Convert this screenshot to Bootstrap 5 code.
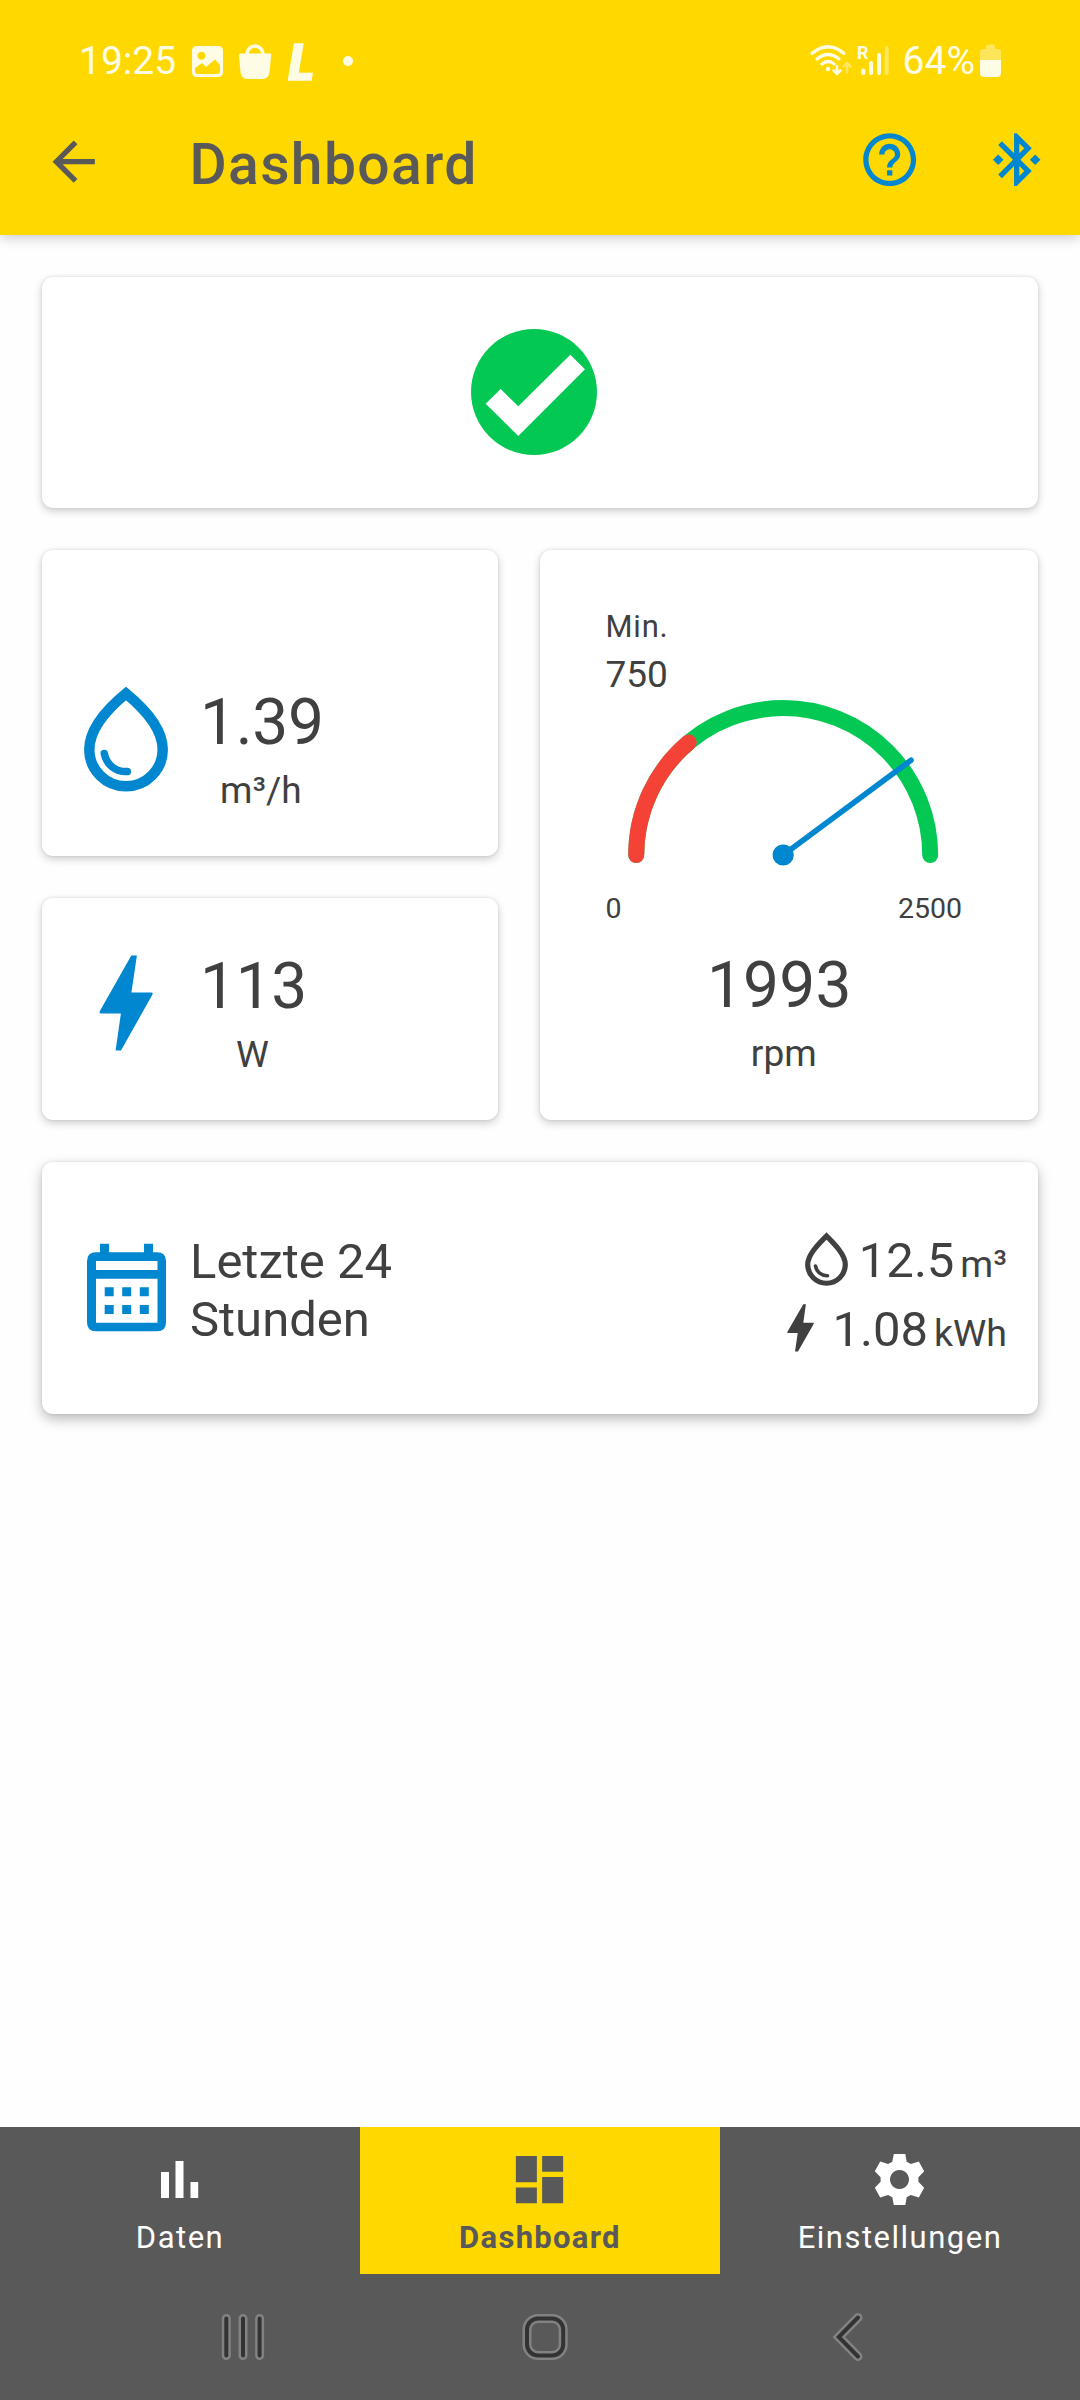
<!DOCTYPE html>
<html lang="de">
<head>
<meta charset="utf-8">
<meta name="viewport" content="width=device-width, initial-scale=1">
<title>Dashboard</title>
<link href="https://cdn.jsdelivr.net/npm/bootstrap@5.3.0/dist/css/bootstrap.min.css" rel="stylesheet">
<style>
  :root { --sun:#ffd800; --ash:#595959; --ink:#404040; --aqua:#0087cf; --leaf:#03c853; --alarm:#f44336; }
  body { font-family:Roboto, "Liberation Sans", sans-serif; color:var(--ink); width:1080px; height:2400px; background:#fefefe; overflow:hidden; }
  svg { display:block; flex-shrink:0; }
  .top-area { height:235px; background:var(--sun); box-shadow:0 3px 12px rgba(0,0,0,.2); position:relative; }
  .status-row { height:122px; padding:0 78px 0 79px; font-size:39px; line-height:46px; color:#fffce6; }
  .clock-text { width:111px; }
  .app-row { height:79px; padding:0 32px 0 42px; }
  .app-title { font-size:57px; line-height:66px; font-weight:500; color:var(--ash); margin-left:84px; padding-top:6px; letter-spacing:1.4px; }
  .app-actions { gap:63px; }
  .content-area { padding:41.500px 42px 0; gap:42px; }
  .tile { border:0; border-radius:11px; background:#fff; box-shadow:0 3px 9px rgba(0,0,0,.2), 0 0 3px rgba(0,0,0,.1); }
  .tile-status { height:231.500px; padding-right:12px; }
  .tile-pair { gap:42px; height:570px; }
  .tile-left { width:456px; gap:42px; }
  .tile-flow { height:306px; }
  .tile-power { height:222px; }
  .tile-metric { padding:0 42px 43px; }
  .metric-text { margin-left:32px; }
  .tile-gauge { width:498px; padding:59px 76px 0 65.500px; }
  .tile-day { height:252px; padding:0 31px 0 42px; box-shadow:0 5px 13px rgba(0,0,0,.27), 0 0 3px rgba(0,0,0,.1); }
  .num-big { font-size:64px; line-height:76px; letter-spacing:-.3px; }
  .num-speed { letter-spacing:.2px; padding-right:9px; }
  .num-unit { font-size:37px; line-height:44px; margin-top:8px; }
  .metric-text .num-unit { padding-right:2px; }
  .min-label { font-size:31px; line-height:36px; letter-spacing:.8px; }
  .min-value { font-size:37px; line-height:46px; margin-top:7px; }
  .gauge-dial { margin:-1px 0 0 -1.500px; }
  .scale-row { font-size:28.500px; line-height:34px; margin-top:24px; margin-bottom:22px; }
  .day-title { font-size:49px; line-height:58px; margin:6px 0 0 22px; }
  .day-sums { margin-top:18px; }
  .day-line { height:69px; font-size:49px; line-height:69px; }
  .day-line svg { margin-bottom:8px; }
  .day-line .drop-mini { margin-right:9.500px; }
  .day-line .bolt-mini { margin-right:18px; }
  .day-line small { font-size:37.500px; margin-left:6px; }
  .tabs-row { height:147px; background:var(--ash); }
  .tab-item { width:360px; padding-top:21px; color:#fff; font-size:31px; line-height:36px; letter-spacing:1.500px; }
  .tab-item svg { margin-right:1.500px; }
  .tab-item span { margin-top:8.500px; }
  .tab-current { background:var(--sun); color:var(--ash); font-weight:700; letter-spacing:1.300px; }
  .system-row { height:126px; background:var(--ash); padding:0 210px 0 220px; }
</style>
</head>
<body class="d-flex flex-column">
<header class="top-area">
  <div class="status-row d-flex align-items-center">
    <span class="clock-text">19:25</span>
    <svg width="46" height="40" viewBox="190 41 46 40"><path fill="#fffce6" fill-rule="evenodd" d="M197 46h21q5 0 5 5v21q0 5-5 5h-21q-5 0-5-5V51q0-5 5-5zM201.500 51.700a4 4 0 1 0 .01 0zM195 68v3q0 3 3 3h19q3 0 3-3v-6l-5-5.500-9 7.500-4-4z"/></svg>
    <svg width="48" height="40" viewBox="236 41 48 40"><path fill="#fffce6" d="M240 53.500h30q1.300 0 1.200 1.500l-1.700 17q-.8 7-7 7h-15q-6.200 0-7-7l-1.700-17q0-1.500 1.200-1.500z"/><path fill="none" stroke="#fffce6" stroke-width="3.300" d="M247 55c0-12 16-12 16 0"/></svg>
    <svg width="52" height="64" viewBox="284 29 52 64"><text x="288.500" y="79.500" font-family="Roboto, sans-serif" font-size="49" font-weight="900" font-style="italic" fill="#fffce6" stroke="#fffce6" stroke-width="1.500">L</text></svg>
    <svg width="24" height="40" viewBox="336 41 24 40"><circle cx="348" cy="61" r="5" fill="#fffce6"/></svg>
    <div class="d-flex align-items-center ms-auto">
      <svg width="95" height="40" viewBox="806 41 95 40">
        <g fill="none" stroke="#fffce6" stroke-width="3.200" stroke-linecap="round">
          <path d="M810 53.500q16-13.500 32 0M815 59q11-9 22 0M820 64q6-5 12 0"/>
          <path d="M835 66v8m-3.500-3.500 3.500 3.500 3.500-3.500" stroke-width="2.600"/>
          <path d="M845 72v-9m-3.500 3.500 3.500-3.500 3.500 3.500" stroke-width="2.600" opacity=".4"/>
          <path d="M861.300 70.500v2.500M869 63v10M877 55v18" stroke-width="4"/>
          <path d="M884.700 48v25" stroke-width="4" opacity=".4"/>
        </g>
        <circle cx="826" cy="69" r="2.200" fill="#fffce6"/>
        <text x="855" y="58.500" font-family="Roboto, sans-serif" font-size="18" font-weight="700" fill="#fffce6">R</text>
      </svg>
      <span>64%</span>
      <svg class="ms-1" width="23" height="40" viewBox="979 41 23 40"><path fill="#fff" opacity=".35" d="M980 60V52q0-3 3-3h3v-2.500q0-2 2-2h5q2 0 2 2V49h3q3 0 3 3v8z"/><path fill="#fffce6" d="M980 60h21v13q0 4-4 4h-13q-4 0-4-4z"/></svg>
    </div>
  </div>
  <div class="app-row d-flex align-items-center">
    <svg width="63.400" height="63.400" viewBox="0 0 24 24" fill="#595959"><path d="M20 11H7.830l5.590-5.590L12 4l-8 8 8 8 1.410-1.410L7.830 13H20v-2z"/></svg>
    <div class="app-title">Dashboard</div>
    <div class="app-actions d-flex ms-auto mb-1">
      <svg width="63.400" height="63.400" viewBox="0 0 24 24" fill="#0087cf"><path d="M11 18h2v-2h-2v2zm1-16C6.480 2 2 6.480 2 12s4.480 10 10 10 10-4.480 10-10S17.520 2 12 2zm0 18c-4.410 0-8-3.590-8-8s3.590-8 8-8 8 3.590 8 8-3.590 8-8 8zm0-14c-2.210 0-4 1.790-4 4h2c0-1.100.9-2 2-2s2 .9 2 2c0 2-3 1.750-3 5h2c0-2.250 3-2.500 3-5 0-2.210-1.790-4-4-4z"/></svg>
      <svg width="63.400" height="63.400" viewBox="0 0 24 24" fill="#0087cf"><path d="M7 12l-2-2-2 2 2 2 2-2zm10.710-4.290L12 2h-1v7.590L6.410 5 5 6.410 10.590 12 5 17.590 6.410 19 11 14.410V22h1l5.710-5.710-4.300-4.290 4.300-4.290zM13 5.830l1.880 1.880L13 9.590V5.830zm1.880 10.460L13 18.170v-3.760l1.880 1.880zM19 10l-2 2 2 2 2-2-2-2z"/></svg>
    </div>
  </div>
</header>

<main class="content-area d-flex flex-column flex-grow-1">
  <section class="card tile tile-status align-items-center justify-content-center">
    <svg width="126" height="126" viewBox="471 329 126 126"><circle cx="534" cy="392" r="63" fill="#03c853"/><path fill="#fff" d="M485.700 403.700l15-14.700 17.600 17.300 52-51.600 14.700 14.600-66.700 66.700z"/></svg>
  </section>

  <div class="tile-pair d-flex">
    <div class="tile-left d-flex flex-column">
      <section class="card tile tile-flow tile-metric flex-row align-items-end">
        <svg style="margin-bottom:21px" width="84" height="106" viewBox="84 686 84 106" fill="none" stroke="#0087cf"><path stroke-width="10.500" d="M126 693.500C112 705 89.300 727 89.300 749.500a36.700 36.700 0 0 0 73.400 0C162.700 727 140 705 126 693.500z"/><path stroke-width="7.500" stroke-linecap="round" d="M104.300 753.500c2 11 11 18.500 23 18"/></svg>
        <div class="metric-text text-center"><div class="num-big">1.39</div><div class="num-unit">m³/h</div></div>
      </section>
      <section class="card tile tile-power tile-metric flex-row align-items-end">
        <svg style="margin-bottom:26px" width="84" height="96" viewBox="84 955 84 96" fill="#0087cf"><path d="M131.300 955.600h5.600l-5.500 36.900h20q2 0 .8 2.500L121 1050.500h-5.400l5.300-37h-20q-2 0-1-2.500z"/></svg>
        <div class="metric-text text-center"><div class="num-big">113</div><div class="num-unit">W</div></div>
      </section>
    </div>
    <section class="card tile tile-gauge">
      <div class="min-label">Min.</div>
      <div class="min-value">750</div>
      <svg class="gauge-dial" width="359" height="171" viewBox="604 697 359 171" fill="none" stroke-linecap="round">
        <path stroke="#03c853" stroke-width="16" d="M636.200 855a147 147 0 0 1 294 0"/>
        <path stroke="#f44336" stroke-width="16" d="M636.200 855A147 147 0 0 1 688.700 742.400"/>
        <path stroke="#0087cf" stroke-width="5.600" d="M783.200 855L911 760.200"/>
        <circle cx="783.200" cy="855" r="10.600" fill="#0087cf"/>
      </svg>
      <div class="scale-row d-flex justify-content-between"><span>0</span><span>2500</span></div>
      <div class="num-big num-speed text-center">1993</div>
      <div class="num-unit text-center">rpm</div>
    </section>
  </div>

  <section class="card tile tile-day flex-row align-items-center">
    <svg width="84" height="90" viewBox="84 1243 84 90" fill="#0087cf"><path fill-rule="evenodd" d="M100 1243.700h9v8.600h35v-8.600h9v8.600h4q9 0 9 9v61q0 9-9 9H96q-9 0-9-9v-61q0-9 9-9h4zM96 1261v9h61.500v-9zM96 1278.700v44h61.500v-44z"/><path d="M104.700 1287.300h9v9h-9zM122.200 1287.300h9v9h-9zM139.800 1287.300h9v9h-9zM104.700 1304.900h9v9h-9zM122.200 1304.900h9v9h-9zM139.800 1304.900h9v9h-9z"/></svg>
    <div class="day-title">Letzte 24<br>Stunden</div>
    <div class="day-sums ms-auto">
      <div class="day-line d-flex justify-content-end align-items-center">
        <svg class="drop-mini" width="44" height="54" viewBox="805 1231.500 44 54" fill="none" stroke="#404040"><path stroke-width="5.200" d="M826.500 1235.500C819 1243 807.700 1254 807.700 1264a18.800 18.800 0 0 0 37.600 0C845.300 1254 834 1243 826.500 1235.500z"/><path stroke-width="3.600" stroke-linecap="round" d="M815.500 1265.500c1 6 6 10 12 9.700"/></svg>
        <span>12.5<small>m³</small></span>
      </div>
      <div class="day-line d-flex justify-content-end align-items-center">
        <svg class="bolt-mini" width="28" height="48" viewBox="787 1303.500 28 48" fill="#404040"><path d="M803.300 1303.700h2.600l-2.600 18.500h9.700q1.400 0 .5 1.500L798 1351h-3l2.700-18.500H788q-1.300 0-.4-1.500z"/></svg>
        <span>1.08<small>kWh</small></span>
      </div>
    </div>
  </section>
</main>

<nav class="tabs-row d-flex">
  <div class="tab-item d-flex flex-column align-items-center">
    <svg width="63" height="63" viewBox="148 2148 63 63" fill="#fff"><path d="M161 2172h8v26h-8zM175.500 2161h8v37h-8zM190.500 2182h7.700v16h-7.700z"/></svg>
    <span>Daten</span>
  </div>
  <div class="tab-item tab-current d-flex flex-column align-items-center">
    <svg width="63" height="63" viewBox="0 0 24 24" fill="#595959"><path d="M3 13h8V3H3v10zm0 8h8v-6H3v6zm10 0h8V11h-8v10zm0-18v6h8V3h-8z"/></svg>
    <span>Dashboard</span>
  </div>
  <div class="tab-item d-flex flex-column align-items-center">
    <svg width="63" height="63" viewBox="-31.500 -31.500 63 63" fill="#fff"><path fill-rule="evenodd" d="M-5.700-25.400H5.800L7.200-17.700 11.400-15.400 19.300-17.900 24.700-8.200 18.900-2.200V2.200L24.700 8.200 19.300 17.900 11.400 15.400 7.200 17.700 5.800 25.400H-5.700L-7.200 17.700-11.400 15.400-19.300 17.900-24.700 8.200-18.900 2.200V-2.200L-24.700-8.200-19.300-17.900-11.400-15.400-7.200-17.700zM0-9.500a9.500 9.500 0 1 0 .01 0z"/></svg>
    <span>Einstellungen</span>
  </div>
</nav>
<div class="system-row d-flex align-items-center justify-content-between">
  <svg width="46" height="50" viewBox="220 2312 46 50" stroke-linecap="round"><path stroke="#828282" stroke-width="9" d="M226.300 2318.500v37M243 2318.500v37M259.600 2318.500v37"/><path stroke="#333" stroke-width="4" d="M226.300 2318.500v37M243 2318.500v37M259.600 2318.500v37"/></svg>
  <svg width="46" height="50" viewBox="522 2312 46 50" fill="none"><rect x="527" y="2318.500" width="36.200" height="37" rx="11" stroke="#828282" stroke-width="9"/><rect x="527" y="2318.500" width="36.200" height="37" rx="11" stroke="#333" stroke-width="4"/></svg>
  <svg width="46" height="50" viewBox="824 2312 46 50" fill="none" stroke-linecap="round"><path stroke="#828282" stroke-width="9" d="M858 2317.500l-19.200 19.500 19.200 19.500"/><path stroke="#333" stroke-width="4" d="M858 2317.500l-19.200 19.500 19.200 19.500"/></svg>
</div>
<script src="https://cdn.jsdelivr.net/npm/bootstrap@5.3.0/dist/js/bootstrap.bundle.min.js"></script>
</body>
</html>
